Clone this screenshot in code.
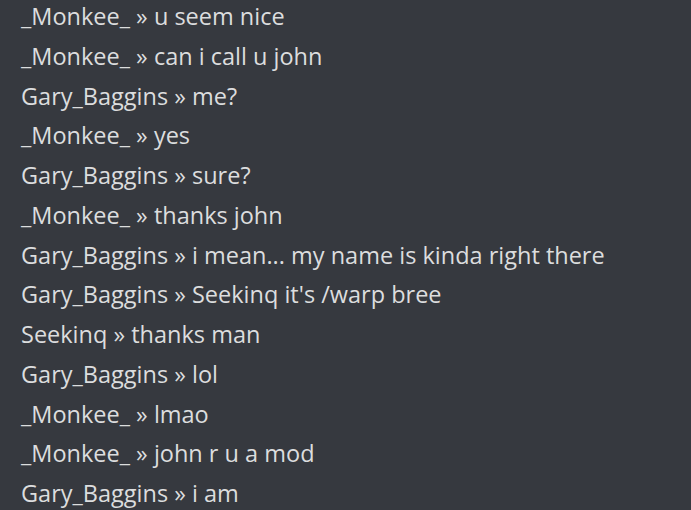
import React from 'react';

const lines: [string, string][] = [
  ['_Monkee_', 'u seem nice'],
  ['_Monkee_', 'can i call u john'],
  ['Gary_Baggins', 'me?'],
  ['_Monkee_', 'yes'],
  ['Gary_Baggins', 'sure?'],
  ['_Monkee_', 'thanks john'],
  ['Gary_Baggins', 'i mean... my name is kinda right there'],
  ['Gary_Baggins', "Seekinq it's /warp bree"],
  ['Seekinq', 'thanks man'],
  ['Gary_Baggins', 'lol'],
  ['_Monkee_', 'lmao'],
  ['_Monkee_', 'john r u a mod'],
  ['Gary_Baggins', 'i am'],
];

export default function App() {
  return (
    <div className="w-[691px] h-[510px] overflow-hidden bg-[#36393f]">
      <div className="-mt-[3px] pl-[21px] font-['Open_Sans',sans-serif] text-[23.5px] leading-[39.75px] text-[#dcddde]">
        {lines.map(([name, msg], i) => (
          <div key={i} className="whitespace-nowrap">
            {name} » {msg}
          </div>
        ))}
      </div>
    </div>
  );
}
